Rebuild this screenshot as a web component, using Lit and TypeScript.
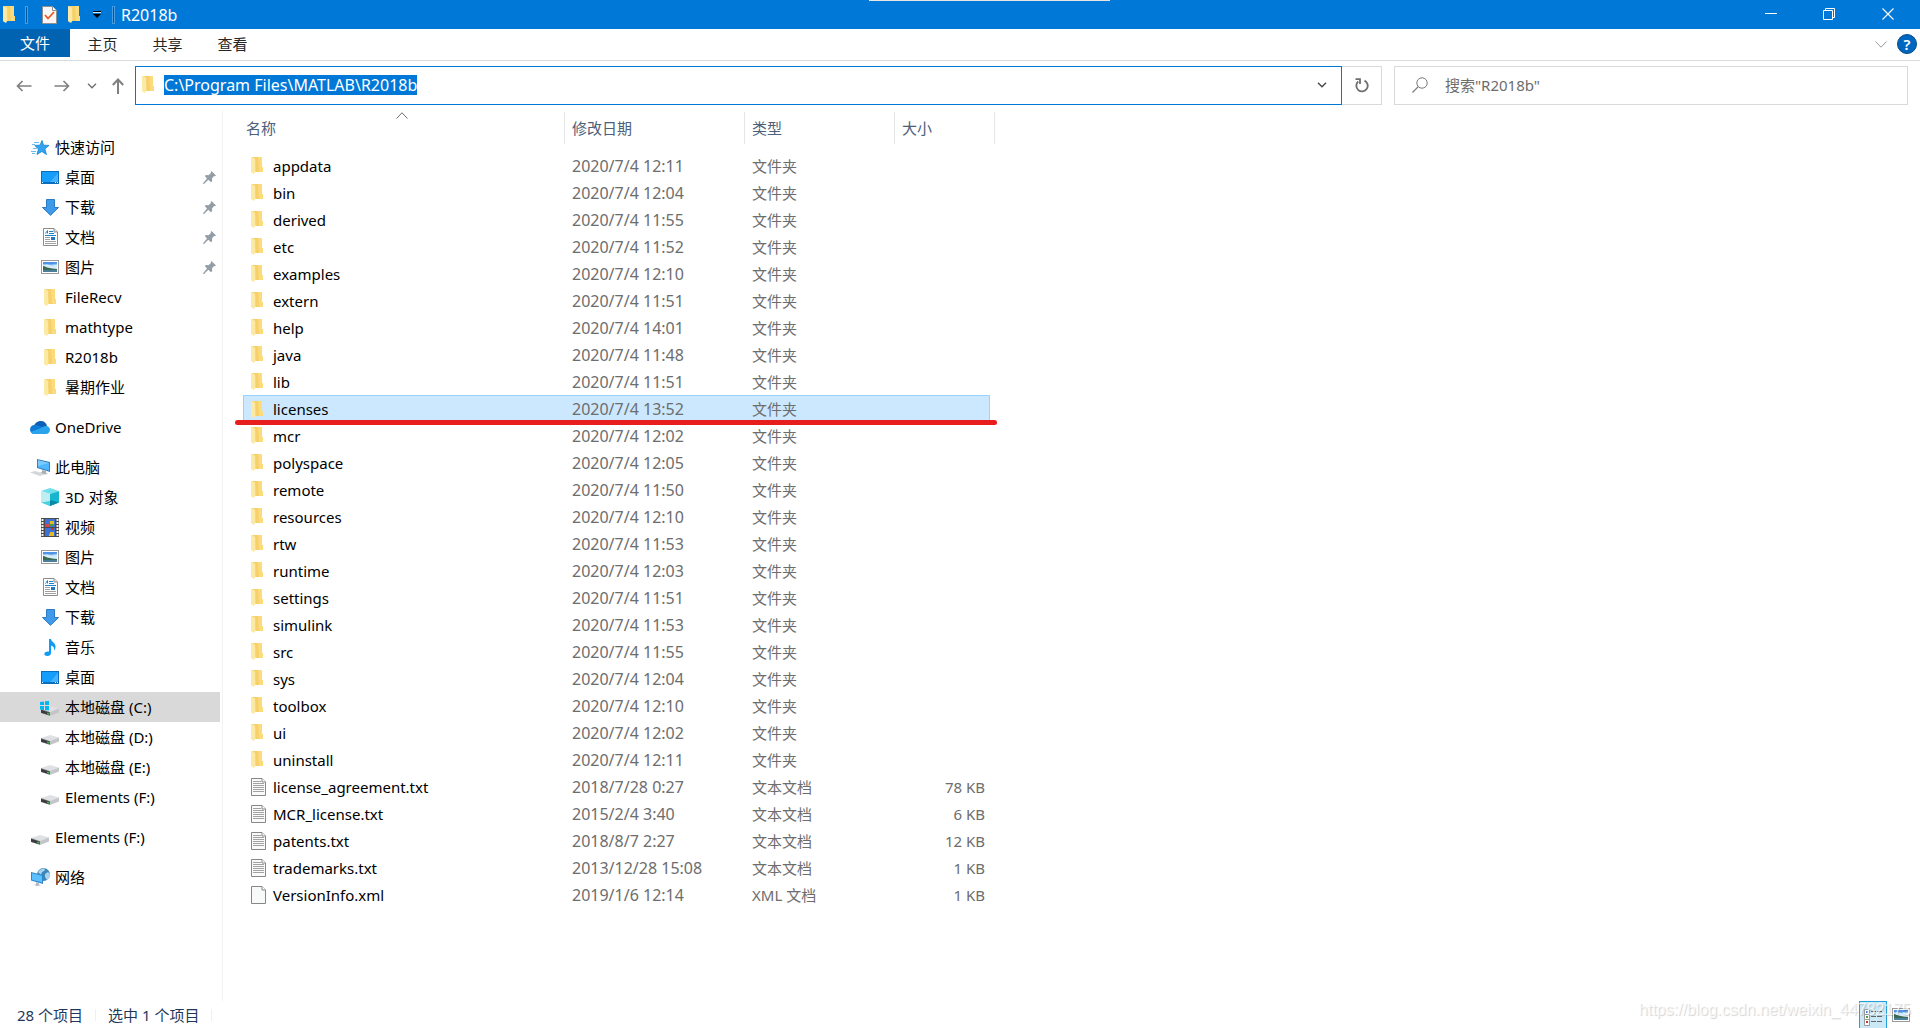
import { LitElement, html, css, svg, nothing, TemplateResult } from "lit";
import { customElement, property } from "lit/decorators.js";

type IconName =
  | "folder" | "task" | "star" | "desktop" | "download" | "document" | "picture" | "pin"
  | "cloud" | "pc" | "cube" | "video" | "music" | "drive" | "sysdrive" | "network"
  | "text" | "blank" | "details" | "min" | "restore" | "close" | "chevron" | "thin"
  | "up" | "back" | "forward" | "refresh" | "search" | "customize" | "help";

interface Glyph { w: number; h: number; body: TemplateResult }

const landscape = svg`
  <rect x=".5" y=".5" width="17" height="13" fill="#fff" stroke="#9a9a9a"/>
  <rect x="2" y="2" width="14" height="10" fill="#8fc4f5"/>
  <path d="M2 2h14v1.500L10 4.500 2 4z" fill="#4f93e6"/>
  <path d="M2 5l4-.5 5 1 5-.8V9H2z" fill="#d7ecfb"/>
  <path d="M2 6c2 0 3 1.500 5 1.700 3 .3 5 1 9 1.300v1.500H2z" fill="#3b6a55"/>
  <path d="M2 10h14v2H2z" fill="#4a7f9c"/>`;

const driveBody = svg`
  <path d="M0 5L9 2l9 2.500-8.500 3.500z" fill="#dfe1e4"/>
  <path d="M9 8l9-3.500v4L9 12z" fill="#c3c5c9"/>
  <path d="M0 5l9 3v4L0 9z" fill="#8a8d90"/>
  <path d="M0 5.800l8.500 2.700v2.800L0 8.800z" fill="#3a3c3e"/>
  <path d="M6 8.500l2 .6v1.600l-2-.6z" fill="#3fb549"/>`;

const GLYPHS: Record<IconName, Glyph> = {
  folder: { w: 12, h: 17, body: svg`
    <path d="M0 0h11v10h1v5H3V2z" fill="#f9d877"/>
    <path d="M3 0h8v10h1v5H5z" fill="#f6d06b"/>
    <path d="M7 0h4v10h1v5H8z" fill="#fbdb7c"/>
    <path d="M0 0l3.500 1.500c.5.2.7.500.7 1V15L3 17 0 15.300z" fill="#fde9a6"/>` },
  task: { w: 15, h: 18, body: svg`
    <path d="M.5.5h10l4 4v13H.5z" fill="#f7f7f7" stroke="#8f8f8f"/>
    <path d="M10.500.5v4h4" fill="#fff" stroke="#8f8f8f"/>
    <path d="M3 9l3 3.500L12 6" fill="none" stroke="#f0561d" stroke-width="1.800"/>` },
  star: { w: 18, h: 15, body: svg`
    <path d="M11 .5l1.500 4.700 5.500.2-4.200 3.600 1.700 5.500-4.700-3-4.800 3 1.500-5.500L3.700 5.400l5.300-.2z" fill="#31a4ee" stroke="#1482cf" stroke-width=".8"/>
    <path d="M3 2.500h5M1 4.500h3M2 8.500h4M0 11.500h5M1 13.500h3" stroke="#6dbcf0" fill="none"/>` },
  desktop: { w: 18, h: 13, body: svg`
    <rect x=".5" y=".5" width="17" height="12" fill="#159dfb" stroke="#0a6ebd"/>
    <path d="M9 11L17 2v9z" fill="#46b2ff"/>
    <path d="M1 11.500h16" stroke="#0a6ebd"/>
    <path d="M1 11.500h1M14 11.500h1M16 11.500h1" stroke="#fff"/>` },
  download: { w: 17, h: 17, body: svg`
    <path d="M4.500.5h8v8h4L8.500 16.300.5 8.500h4z" fill="#3d9be9" stroke="#2a7ac6"/>` },
  document: { w: 15, h: 18, body: svg`
    <path d="M.5.500h10.500l3.500 3.500v13.500H.5z" fill="#fff" stroke="#8b8b8b"/>
    <path d="M11 .5V4h3.500" fill="#e4e4e4" stroke="#8b8b8b"/>
    <path d="M2.500 5.500L4.500 2.500V5.500M6 3.500h4M6 5.500h5M2 7.500h11" stroke="#1b84d1" fill="none"/>
    <path d="M2 9.500h5M2 11.500h5M2 13.500h11M2 15.500h11" stroke="#a0a0a0"/>
    <rect x="8" y="9" width="4" height="3" fill="#2678bd"/>` },
  picture: { w: 18, h: 14, body: landscape },
  pin: { w: 13, h: 13, body: svg`
    <path d="M8.500 0L13 4.500l-1.200.7-.8-.2-2 2.500.2 2.500L8 11.200 5.300 8.700 1 13l-1-.2L.3 12 4 7.500 1.800 5 3 4l2.500.2L8 2l-.3-1z" fill="#929da6"/>` },
  cloud: { w: 20, h: 13, body: svg`
    <path d="M4 5C5 1.500 8 0 11 0c3 0 5.500 2 6 5l-6 3z" fill="#0a5fb4"/>
    <path d="M4.500 4C2 4 0 6 0 8.500 0 11 2 13 4.500 13l9-6C11 5 8 3.500 4.500 4z" fill="#0f7ad6"/>
    <path d="M16 5c2.500 0 4 2 4 4 0 2.300-1.800 4-4 4H4.500c-1.700 0-3-.8-3.800-2L11 7c1.200-1.200 3-2 5-2z" fill="#29a4ec"/>` },
  pc: { w: 20, h: 17, body: svg`
    <path d="M7 0l13 3v10L7 9z" fill="#3b7fb8"/>
    <path d="M8 1.300l11 2.600v7.700L8 8.200z" fill="#4db8ff"/>
    <path d="M8 1.300l11 2.600-11 3z" fill="#7ccbff"/>
    <path d="M12 11l4 1v2l2 1-5 .5-3-1.500 2-1z" fill="#a8adb3"/>
    <path d="M0 13.500L5 12l10 3-5 2z" fill="#d3d6da"/>` },
  cube: { w: 18, h: 18, body: svg`
    <path d="M0 3l9-3 9 3-9 3z" fill="#6fe0ea"/>
    <path d="M0 3l9 3v12l-9-3.500z" fill="#bfeef2"/>
    <path d="M18 3L9 6v12l9-3.500z" fill="#18b5cf"/>
    <path d="M9 12l9 2.500L9 18z" fill="#058ba6"/>
    <path d="M9 13l-9 1.500L9 18z" fill="#4bd0df"/>` },
  video: { w: 18, h: 19, body: svg`
    <rect width="18" height="19" fill="#4a4a4a"/>
    <path d="M1.500 1v17M16.500 1v17" stroke="#f3f3f3" stroke-width="2" stroke-dasharray="2 1"/>
    <rect x="4" y="1" width="10" height="8" fill="#3d72d6"/>
    <rect x="4" y="10" width="10" height="8" fill="#3d72d6"/>
    <path d="M9 3h4v3H9zM9 14h4v3H9z" fill="#e8b923"/>
    <path d="M4 6h5v3H4z" fill="#d9434b"/><path d="M9 6h4v2H9z" fill="#4b9a3c"/>
    <path d="M10 10h3v2h-3z" fill="#c0392b"/><path d="M8 16h5v2H8z" fill="#e8b923"/>` },
  music: { w: 12, h: 17, body: svg`
    <path d="M5 0h2c.3 3 4 3.500 4.500 7 .2 2-.5 3.500-1.500 4.500.5-2.500-.5-4.500-3-5V14c0 1.800-1.500 3-3.700 3C1.500 17 .3 16.200.3 15c0-1.500 1.700-2.600 3.700-2.600.4 0 .7 0 1 .1z" fill="#0f9bf5"/>` },
  drive: { w: 18, h: 16, body: svg`<g transform="translate(0 4)">${driveBody}</g>` },
  sysdrive: { w: 20, h: 18, body: svg`
    <g transform="translate(1 6)">${driveBody}</g>
    <path d="M0 4l4-.5V7H0zM5 3.300L9 3v4H5zM0 8h4v4l-4-.5zM5 8h4v4.500L5 12z" fill="#00b7f1"/>` },
  network: { w: 19, h: 18, body: svg`
    <circle cx="12.500" cy="6.500" r="6.500" fill="#3f86b8"/>
    <path d="M7 4c2-3 5-4 7-3.500 0 2-1 3-3 3.500l-1 3zM14 6l3-2 2 2c0 3-1 5-3 6l-2-3z" fill="#a9d5ec"/>
    <path d="M0 4l12 3v9L0 12.500z" fill="#2f86c8"/>
    <path d="M1 5.300l10 2.500v6.800L1 11.700z" fill="#5cc0ff"/>
    <path d="M5 14l3 1v1.500l2 .8-4 .7-3-1 2-.7z" fill="#b5bac0"/>` },
  text: { w: 15, h: 18, body: svg`
    <path d="M.5.500h10.500l3.500 3.500v13.500H.5z" fill="#fafafa" stroke="#878787"/>
    <path d="M11 .5V4h3.500" fill="#fff" stroke="#878787"/>
    <path d="M2 3.500h8M2 5.500h11M2 7.500h11M2 9.500h11M2 11.500h11M2 13.500h11" stroke="#a2a2a2"/>` },
  blank: { w: 15, h: 18, body: svg`
    <path d="M.5.500h10.500l3.500 3.500v13.500H.5z" fill="#f8fafa" stroke="#878787"/>
    <path d="M11 .5V4h3.500" fill="#fff" stroke="#878787"/>` },
  details: { w: 18, h: 17, body: svg`
    <path d="M.5.500h5v5h-5zM.5 5.500h5v5h-5zM.5 10.500h5v6h-5z" fill="#fff" stroke="#9b9b9b"/>
    <path d="M2 2h2v2H2z" fill="#3a7fd0"/><path d="M2 7h2v2H2z" fill="#5f9a3c"/><path d="M2 12h2v2H2z" fill="#c0392b"/>
    <path d="M7 2.500h5M13 2.500h5M7 7.500h5M13 7.500h5M7 12.500h5M13 12.500h5" stroke="#666"/>` },
  min: { w: 12, h: 12, body: svg`<path d="M0 5.500h12" stroke="#fff"/>` },
  restore: { w: 12, h: 12, body: svg`<path d="M.5 2.500h9v9h-9zM2.500 2.500v-2h9v9h-2" fill="none" stroke="#fff"/>` },
  close: { w: 12, h: 12, body: svg`<path d="M.5.500l11 11M11.500.500l-11 11" stroke="#fff" stroke-width="1.100"/>` },
  chevron: { w: 10, h: 6, body: svg`<path d="M1 .8l4 4 4-4" fill="none" stroke="currentColor" stroke-width="1.300"/>` },
  thin: { w: 12, h: 7, body: svg`<path d="M.5.500L6 6.200 11.500.500" fill="none" stroke="currentColor"/>` },
  up: { w: 12, h: 16, body: svg`<path d="M6 16V1.500M.8 7L6 1.500 11.200 7" fill="none" stroke="#808080" stroke-width="2"/>` },
  back: { w: 16, h: 12, body: svg`<path d="M15.500 6H1.500M6.500 1L1.500 6l5 5" fill="none" stroke="#808080" stroke-width="1.700"/>` },
  forward: { w: 16, h: 12, body: svg`<path d="M.5 6h14M9.500 1l5 5-5 5" fill="none" stroke="#808080" stroke-width="1.700"/>` },
  refresh: { w: 14, h: 15, body: svg`<path d="M9.500 2.600a5.700 5.700 0 1 1-6.300.9M.5 1.200h4.500V6" fill="none" stroke="#6e6e6e" stroke-width="1.800"/>` },
  search: { w: 16, h: 16, body: svg`<circle cx="10" cy="6" r="5.200" fill="none" stroke="#7a7a7a"/><path d="M6.200 9.700L.5 15.500" stroke="#7a7a7a" stroke-width="1.200"/>` },
  customize: { w: 8, h: 7, body: svg`<path d="M0 .5h8" stroke="#000"/><path d="M0 3h8L4 7z" fill="#000"/><path d="M0 1.500h8" stroke="#cfe5f7"/>` },
  help: { w: 20, h: 20, body: svg`<circle cx="10" cy="10" r="9.500" fill="#0067c0" stroke="#0a4a86"/>` },
};

@customElement("fx-icon")
export class FxIcon extends LitElement {
  @property() name: IconName = "folder";
  static styles = css`
    :host { display: inline-flex; flex: none; }
    svg { display: block; }
  `;
  render() {
    const g = GLYPHS[this.name];
    return html`<svg width=${g.w} height=${g.h} viewBox="0 0 ${g.w} ${g.h}" aria-hidden="true">${g.body}</svg>`;
  }
}

interface Place { label: string; icon: IconName; pinned?: boolean; current?: boolean }
interface Group { root: Place; items: Place[] }

const GROUPS: Group[] = [
  { root: { label: "快速访问", icon: "star" }, items: [
    { label: "桌面", icon: "desktop", pinned: true },
    { label: "下载", icon: "download", pinned: true },
    { label: "文档", icon: "document", pinned: true },
    { label: "图片", icon: "picture", pinned: true },
    { label: "FileRecv", icon: "folder" },
    { label: "mathtype", icon: "folder" },
    { label: "R2018b", icon: "folder" },
    { label: "暑期作业", icon: "folder" },
  ] },
  { root: { label: "OneDrive", icon: "cloud" }, items: [] },
  { root: { label: "此电脑", icon: "pc" }, items: [
    { label: "3D 对象", icon: "cube" },
    { label: "视频", icon: "video" },
    { label: "图片", icon: "picture" },
    { label: "文档", icon: "document" },
    { label: "下载", icon: "download" },
    { label: "音乐", icon: "music" },
    { label: "桌面", icon: "desktop" },
    { label: "本地磁盘 (C:)", icon: "sysdrive", current: true },
    { label: "本地磁盘 (D:)", icon: "drive" },
    { label: "本地磁盘 (E:)", icon: "drive" },
    { label: "Elements (F:)", icon: "drive" },
  ] },
  { root: { label: "Elements (F:)", icon: "drive" }, items: [] },
  { root: { label: "网络", icon: "network" }, items: [] },
];

interface Entry { name: string; date: string; type: string; size: string; icon: IconName }

const dir = (name: string, time: string): Entry =>
  ({ name, date: `2020/7/4 ${time}`, type: "文件夹", size: "", icon: "folder" });
const txt = (name: string, date: string, size: string): Entry =>
  ({ name, date, type: "文本文档", size, icon: "text" });

const ENTRIES: Entry[] = [
  dir("appdata", "12:11"), dir("bin", "12:04"), dir("derived", "11:55"), dir("etc", "11:52"),
  dir("examples", "12:10"), dir("extern", "11:51"), dir("help", "14:01"), dir("java", "11:48"),
  dir("lib", "11:51"), dir("licenses", "13:52"), dir("mcr", "12:02"), dir("polyspace", "12:05"),
  dir("remote", "11:50"), dir("resources", "12:10"), dir("rtw", "11:53"), dir("runtime", "12:03"),
  dir("settings", "11:51"), dir("simulink", "11:53"), dir("src", "11:55"), dir("sys", "12:04"),
  dir("toolbox", "12:10"), dir("ui", "12:02"), dir("uninstall", "12:11"),
  txt("license_agreement.txt", "2018/7/28 0:27", "78 KB"),
  txt("MCR_license.txt", "2015/2/4 3:40", "6 KB"),
  txt("patents.txt", "2018/8/7 2:27", "12 KB"),
  txt("trademarks.txt", "2013/12/28 15:08", "1 KB"),
  { name: "VersionInfo.xml", date: "2019/1/6 12:14", type: "XML 文档", size: "1 KB", icon: "blank" },
];

const SELECTED = "licenses";

@customElement("app-root")
export class AppRoot extends LitElement {
  static styles = css`
    :host {
      display: flex; flex-direction: column; height: 100vh; overflow: hidden; position: relative;
      background: #fff; color: #000;
      font: 15px/20px "Noto Sans", "Noto Sans CJK SC", sans-serif;
    }
    * { box-sizing: border-box; }
    button { font: inherit; color: inherit; background: none; border: 0; padding: 0; display: flex; align-items: center; justify-content: center; cursor: default; }
    a { color: inherit; text-decoration: none; }
    .titlebar { display: flex; align-items: center; flex: none; height: 29px; background: #0078d7; color: #fff; position: relative; }
    .quick { display: flex; align-items: center; padding-left: 3px; }
    .quick .rule { width: 3px; height: 18px; border: 1px solid #4a9be0; background: #055a9f; }
    .quick .a { margin: 0 14px 0 10px; }
    .quick .b { margin: 0 6px 0 11px; }
    .quick .task { margin-right: 11px; }
    .quick .drop { margin-left: 13px; }
    .notch { position: absolute; left: 869px; top: 0; width: 241px; height: 1px; background: #e6e6e6; }
    .title { font-weight: 400; font-size: 16px; line-height: 20px; margin: 0; flex: 1; }
    .win { display: flex; height: 28px; align-self: flex-start; }
    .win button { width: 58px; height: 28px; }
    .win .last { width: 62px; padding-right: 2px; }
    .ribbon { display: flex; flex: none; height: 32px; border-bottom: 1px solid #dadbdc; color: #262626; }
    .ribbon .file { width: 70px; height: 28px; background: #0063b1; color: #fff; }
    .ribbon .tab { width: 65px; height: 30px; }
    .ribbon .tools { margin-left: auto; height: 30px; display: flex; align-items: center; gap: 10px; padding-right: 3px; color: #9a9a9a; }
    .help { position: relative; color: #fff; }
    .help span { position: absolute; inset: 0; text-align: center; font-weight: 600; }
    .nav { display: flex; flex: none; height: 49px; padding: 5px 12px 5px 16px; color: #6e6e6e; }
    .nav .arrows { display: flex; align-items: center; flex: none; width: 119px; }
    .arrows .fwd { margin-left: 22px; }
    .arrows .hist { margin-left: 17px; }
    .arrows .upb { margin-left: 15px; }
    .address { flex: 1; display: flex; align-items: center; border: 1px solid #0078d7; padding: 0 14px 2px 6px; color: #444; }
    .field { flex: 1; display: flex; align-items: center; gap: 10px; }
    .address input, .search input { font: inherit; font-size: 16px; border: 0; outline: 0; padding: 0; background: none; width: 100%; min-width: 0; color: #6d6d6d; }
    .address input { field-sizing: content; width: auto; background: #0078d7; color: #fff; height: 20px; }
    .refresh { width: 40px; border: 1px solid #d9d9d9; border-left: 0; }
    .search { width: 514px; margin-left: 12px; display: flex; align-items: center; gap: 17px; border: 1px solid #d9d9d9; padding: 0 0 2px 17px; }
    .search input { font-size: 15px; }
    .search input::placeholder { color: #6d6d6d; opacity: 1; }
    .body { flex: 1; display: flex; min-height: 0; }
    .tree { width: 223px; flex: none; border-right: 1px solid #f3f3f3; padding: 22px 2px 0 0; display: flex; flex-direction: column; gap: 10px; overflow: hidden; }
    .tree ul { list-style: none; margin: 0; padding: 0; }
    .node { display: flex; align-items: center; height: 30px; padding-left: 30px; }
    .node .slot { width: 20px; margin-right: 5px; display: flex; justify-content: center; flex: none; }
    .child { padding-left: 40px; }
    .current { background: #d9d9d9; }
    .pin { margin-left: auto; padding-right: 4px; }
    .files { flex: 1; min-width: 0; padding: 2px 0 0 20px; }
    table { border-collapse: separate; border-spacing: 0; table-layout: fixed; width: 752px; }
    .c-name { width: 322px; } .c-date { width: 180px; } .c-type { width: 150px; } .c-size { width: 95px; } .c-end { width: 5px; }
    th { height: 32px; padding: 0 0 0 7px; text-align: left; font-weight: 400; color: #4c607a; border-right: 1px solid #e5e5e5; position: relative; }
    th.name { padding-left: 3px; }
    .sort { position: absolute; left: 153px; top: 0; color: #6d6d6d; transform: rotate(180deg); }
    td { height: 27px; padding: 0 0 0 7px; color: #6d6d6d; white-space: nowrap; }
    tbody::before { content: ""; display: table-row; height: 8px; }
    td.name { color: #000; padding-left: 8px; }
    td.date { font-size: 16px; }
    .label { display: flex; align-items: center; }
    .label .slot { display: flex; align-items: center; width: 22px; height: 20px; }
    td.size { text-align: right; padding-right: 5px; }
    td.end { padding: 0; }
    .chosen td:not(.end) { background: #cce8ff; border-top: 1px solid #99d1ff; }
    .chosen td.name { border-left: 1px solid #99d1ff; padding-left: 7px; position: relative; }
    .chosen td.size { border-right: 1px solid #99d1ff; padding-right: 4px; }
    .mark { position: absolute; left: -9px; top: 24px; width: 762px; height: 5px; border-radius: 3px; background: #e81e1e; z-index: 1; }
    .status { flex: none; height: 27px; display: flex; color: #1e395b; padding-left: 17px; line-height: 28px; }
    .status span { padding-right: 13px; margin-right: 12px; background: linear-gradient(#f0f0f0, #f0f0f0) right center / 1px 12px no-repeat; }
    .views { margin-left: auto; display: flex; padding-right: 10px; gap: 5px; }
    .views .on { width: 28px; height: 27px; border: 1px solid #26a0da; border-bottom: 0; background: #cbe8f6; padding-top: 4px; }
    .watermark { position: absolute; right: 9px; bottom: 8px; font: 16px/20px "Liberation Sans", sans-serif; color: rgba(255,255,255,.75); text-shadow: 1px 1px 1px rgba(0,0,0,.18); pointer-events: none; }
  `;

  private node(p: Place, child: boolean) {
    return html`<a href="#" class="node ${child ? "child" : ""} ${p.current ? "current" : ""}">
      <span class="slot"><fx-icon name=${p.icon}></fx-icon></span>${p.label}
      ${p.pinned ? html`<fx-icon class="pin" name="pin"></fx-icon>` : nothing}
    </a>`;
  }

  private row(e: Entry) {
    const on = e.name === SELECTED;
    return html`<tr class=${on ? "chosen" : ""}>
      <td class="name">${on ? html`<span class="mark"></span>` : nothing}
        <span class="label"><span class="slot"><fx-icon name=${e.icon}></fx-icon></span>${e.name}</span></td>
      <td class="date">${e.date}</td><td>${e.type}</td><td class="size">${e.size}</td><td class="end"></td>
    </tr>`;
  }

  render() {
    return html`
      <header class="titlebar">
        <div class="quick">
          <fx-icon name="folder"></fx-icon><i class="rule a"></i>
          <button class="task" aria-label="属性"><fx-icon name="task"></fx-icon></button>
          <button aria-label="新建文件夹"><fx-icon name="folder"></fx-icon></button>
          <button class="drop" aria-label="自定义"><fx-icon name="customize"></fx-icon></button>
          <i class="rule b"></i>
        </div>
        <h1 class="title">R2018b</h1>
        <div class="win">
          <button aria-label="最小化"><fx-icon name="min"></fx-icon></button>
          <button aria-label="还原"><fx-icon name="restore"></fx-icon></button>
          <button class="last" aria-label="关闭"><fx-icon name="close"></fx-icon></button>
        </div>
        <i class="notch"></i>
      </header>
      <nav class="ribbon">
        <button class="file">文件</button>
        <button class="tab">主页</button><button class="tab">共享</button><button class="tab">查看</button>
        <div class="tools">
          <button aria-label="展开功能区"><fx-icon name="thin"></fx-icon></button>
          <button class="help" aria-label="帮助"><fx-icon name="help"></fx-icon><span>?</span></button>
        </div>
      </nav>
      <div class="nav">
        <div class="arrows">
          <button aria-label="后退"><fx-icon name="back"></fx-icon></button>
          <button class="fwd" aria-label="前进"><fx-icon name="forward"></fx-icon></button>
          <button class="hist" aria-label="最近位置"><fx-icon name="chevron"></fx-icon></button>
          <button class="upb" aria-label="向上"><fx-icon name="up"></fx-icon></button>
        </div>
        <div class="address">
          <label class="field"><fx-icon name="folder"></fx-icon>
            <input type="text" aria-label="地址" .value=${"C:\\Program Files\\MATLAB\\R2018b"}></label>
          <button aria-label="以前的位置"><fx-icon name="chevron"></fx-icon></button>
        </div>
        <button class="refresh" aria-label="刷新"><fx-icon name="refresh"></fx-icon></button>
        <label class="search"><fx-icon name="search"></fx-icon>
          <input type="text" aria-label="搜索" placeholder='搜索"R2018b"'></label>
      </div>
      <div class="body">
        <nav class="tree">
          ${GROUPS.map((g) => html`<ul>
            <li>${this.node(g.root, false)}</li>
            ${g.items.map((p) => html`<li>${this.node(p, true)}</li>`)}
          </ul>`)}
        </nav>
        <main class="files">
          <table>
            <colgroup><col class="c-name"><col class="c-date"><col class="c-type"><col class="c-size"><col class="c-end"></colgroup>
            <thead><tr>
              <th class="name">名称<fx-icon class="sort" name="thin"></fx-icon></th>
              <th>修改日期</th><th>类型</th><th colspan="2">大小</th>
            </tr></thead>
            <tbody>${ENTRIES.map((e) => this.row(e))}</tbody>
          </table>
        </main>
      </div>
      <footer class="status">
        <span>28 个项目</span><span>选中 1 个项目</span>
        <div class="views">
          <button class="on" aria-label="详细信息"><fx-icon name="details"></fx-icon></button>
          <button aria-label="大图标"><fx-icon name="picture"></fx-icon></button>
        </div>
      </footer>
      <div class="watermark">https://blog.csdn.net/weixin_44782175</div>
    `;
  }
}
